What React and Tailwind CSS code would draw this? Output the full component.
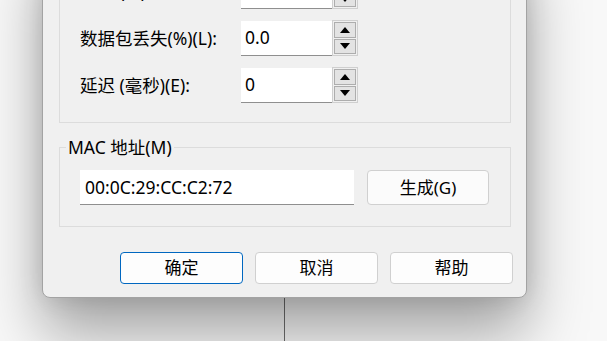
import React from 'react';

const FONT = { fontFamily: '"Noto Sans", "Noto Sans CJK SC", sans-serif' };

const Arrow = ({ up }) => (
  <svg width="10" height="6" viewBox="0 0 10 6">
    {up ? <polygon points="0,6 10,6 5,0" fill="#000" /> : <polygon points="0,0 10,0 5,6" fill="#000" />}
  </svg>
);

const Spinner = () => (
  <div className="w-[26px] h-[36px] border border-[#cfcfcf] bg-[#f0f0f0] p-px flex flex-col gap-px">
    <div className="flex-1 border border-[#adadad] bg-[#e3e3e3] flex items-center justify-center">
      <Arrow up />
    </div>
    <div className="flex-1 border border-[#adadad] bg-[#e3e3e3] flex items-center justify-center">
      <Arrow />
    </div>
  </div>
);

const SpinRow = ({ label, value }) => (
  <div className="flex items-center h-[36px]">
    <div className="w-[161px] text-[17.5px] leading-5 text-black whitespace-nowrap">{label}</div>
    <div className="w-[91px] h-[35px] bg-white border-b border-[#8f8f8f] flex items-center pl-[4px] text-[17.5px] text-black">
      {value}
    </div>
    <Spinner />
  </div>
);

const Btn = ({ children, primary }) => (
  <button
    className={
      primary
        ? 'w-[123px] h-[32px] rounded-[4px] border border-[#0067c0] bg-[#fdfdfd] text-[17px] text-black'
        : 'w-[123px] h-[32px] rounded-[4px] border border-[#d0d0d0] bg-[#fdfdfd] text-[17px] text-black'
    }
  >
    {children}
  </button>
);

export default function App() {
  return (
    <div className="relative w-[607px] h-[341px] overflow-hidden bg-[#f8f8f8]" style={FONT}>
      <div className="absolute left-[284px] top-0 bottom-0 w-px bg-[#6e6e6e]" />
      <div className="relative ml-[42px] -mt-[61px] w-[485px] bg-[#f0f0f0] border border-[#a3a3a3] rounded-b-[8px] pt-[12px] pb-[13px] shadow-[0_36px_60px_rgba(0,0,0,0.34),0_0_24px_rgba(0,0,0,0.12)]">
        <div className="ml-[16px] mr-[15px] border border-[#dcdcdc] pt-[20px] pb-[19px] pl-[20px] flex flex-col gap-[11px]">
          <SpinRow label="带宽 (M)" value="" />
          <SpinRow label="数据包丢失(%)(L):" value="0.0" />
          <SpinRow label="延迟 (毫秒)(E):" value="0" />
        </div>
        <fieldset className="ml-[16px] mr-[15px] mt-[14px] border border-[#dcdcdc] p-0">
          <legend className="ml-[6px] px-[2px] text-[17.5px] leading-5 text-black">MAC 地址(M)</legend>
          <div className="flex items-center gap-[13px] pl-[20px] pt-[13px] pb-[21px]">
            <div className="w-[274px] h-[35px] bg-white border-b border-[#8f8f8f] flex items-center pl-[5px] text-[17.5px] text-black">
              00:0C:29:CC:C2:72
            </div>
            <button className="w-[122px] h-[35px] rounded-[4px] border border-[#d0d0d0] bg-[#fbfbfb] text-[17px] text-black">
              生成(G)
            </button>
          </div>
        </fieldset>
        <div className="mt-[25px] pr-[13px] flex justify-end gap-[12px]">
          <Btn primary>确定</Btn>
          <Btn>取消</Btn>
          <Btn>帮助</Btn>
        </div>
      </div>
    </div>
  );
}
